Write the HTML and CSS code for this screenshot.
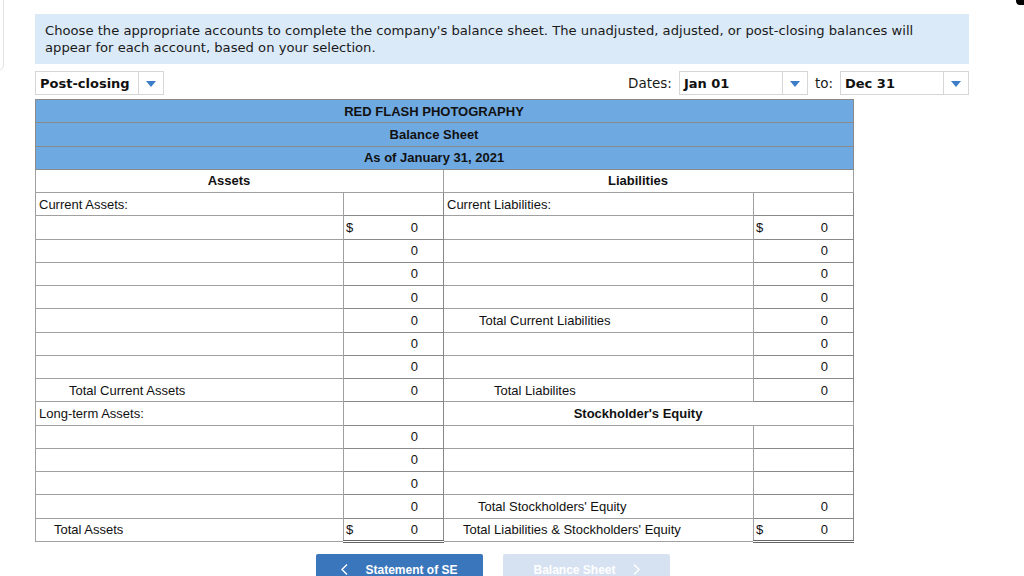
FILE: index.html
```html
<!DOCTYPE html>
<html lang="en">
<head>
<meta charset="utf-8">
<title>Balance Sheet</title>
<link rel="stylesheet" href="styles.css">
</head>
<body>
<div class="page">
  <div class="side-card"></div>
  <div class="corner-mark"></div>
  <div class="instructions">Choose the appropriate accounts to complete the company's balance sheet. The unadjusted, adjusted, or post-closing balances will<br>appear for each account, based on your selection.</div>
  <div class="controls">
    <div class="select select-type"><span class="select-value">Post-closing</span><span class="select-arrow"><span class="tri"></span></span></div>
    <div class="dates">
      <span class="dates-label">Dates:</span>
      <div class="select select-date"><span class="select-value">Jan 01</span><span class="select-arrow"><span class="tri"></span></span></div>
      <span class="dates-label">to:</span>
      <div class="select select-date"><span class="select-value">Dec 31</span><span class="select-arrow"><span class="tri"></span></span></div>
    </div>
  </div>
  <table class="sheet">
    <colgroup>
      <col class="col-label-l"><col class="col-amt"><col class="col-label-r"><col class="col-amt">
    </colgroup>
    <tr class="head"><td colspan="4">RED FLASH PHOTOGRAPHY</td></tr>
    <tr class="head"><td colspan="4">Balance Sheet</td></tr>
    <tr class="head"><td colspan="4">As of January 31, 2021</td></tr>
    <tr class="section"><td colspan="2">Assets</td><td colspan="2">Liabilities</td></tr>
    <tr><td class="label">Current Assets:</td><td class="amt"></td><td class="label">Current Liabilities:</td><td class="amt"></td></tr>
    <tr><td class="label"></td><td class="amt"><span class="cur">$</span>0</td><td class="label"></td><td class="amt"><span class="cur">$</span>0</td></tr>
    <tr><td class="label"></td><td class="amt">0</td><td class="label"></td><td class="amt">0</td></tr>
    <tr><td class="label"></td><td class="amt">0</td><td class="label"></td><td class="amt">0</td></tr>
    <tr><td class="label"></td><td class="amt">0</td><td class="label"></td><td class="amt">0</td></tr>
    <tr><td class="label"></td><td class="amt">0</td><td class="label ind-36">Total Current Liabilities</td><td class="amt total">0</td></tr>
    <tr><td class="label"></td><td class="amt">0</td><td class="label"></td><td class="amt">0</td></tr>
    <tr><td class="label"></td><td class="amt">0</td><td class="label"></td><td class="amt">0</td></tr>
    <tr><td class="label ind-34">Total Current Assets</td><td class="amt total">0</td><td class="label ind-51">Total Liabilites</td><td class="amt total">0</td></tr>
    <tr><td class="label">Long-term Assets:</td><td class="amt"></td><td class="subhead" colspan="2">Stockholder's Equity</td></tr>
    <tr><td class="label"></td><td class="amt">0</td><td class="label"></td><td class="amt"></td></tr>
    <tr><td class="label"></td><td class="amt">0</td><td class="label"></td><td class="amt"></td></tr>
    <tr><td class="label"></td><td class="amt">0</td><td class="label"></td><td class="amt"></td></tr>
    <tr><td class="label"></td><td class="amt">0</td><td class="label ind-35">Total Stockholders' Equity</td><td class="amt total">0</td></tr>
    <tr><td class="label ind-19">Total Assets</td><td class="amt total grand"><span class="cur">$</span>0</td><td class="label ind-20">Total Liabilities &amp; Stockholders' Equity</td><td class="amt total grand"><span class="cur">$</span>0</td></tr>
  </table>
  <div class="nav">
    <button class="nav-btn nav-prev"><svg class="chev" width="7" height="11" viewBox="0 0 7 11"><polyline points="6,0.5 1,5.5 6,10.5" fill="none" stroke="#fff" stroke-width="1.4"/></svg>Statement of SE</button>
    <button class="nav-btn nav-next" disabled>Balance Sheet<svg class="chev" width="7" height="11" viewBox="0 0 7 11"><polyline points="1,0.5 6,5.5 1,10.5" fill="none" stroke="#fff" stroke-width="1.4"/></svg></button>
  </div>
</div>
</body>
</html>
```

FILE: styles.css
```css
html, body {
  margin: 0;
  padding: 0;
  background: #fff;
  overflow: hidden;
}
body {
  font-family: "Liberation Sans", Arial, sans-serif;
  color: #111;
}
.page {
  position: relative;
  width: 1024px;
  height: 576px;
  box-sizing: border-box;
  padding: 14px 0 0 35px;
}
.side-card {
  position: absolute;
  left: -12px;
  top: -12px;
  width: 14px;
  height: 81px;
  border: 1px solid #e2e2e2;
  border-radius: 6px;
}
.corner-mark {
  position: absolute;
  right: -4px;
  top: -6px;
  width: 12px;
  height: 11px;
  background: #000;
  border-radius: 4px;
}
.instructions {
  width: 914px;
  height: 34px;
  padding: 8px 10px;
  background: #dbeaf8;
  font-family: "DejaVu Sans", Verdana, sans-serif;
  font-size: 13.15px;
  line-height: 17px;
  color: #1a1a1a;
  white-space: nowrap;
}
.controls {
  display: flex;
  justify-content: space-between;
  align-items: center;
  width: 934px;
  margin-top: 7px;
  height: 24px;
}
.select {
  display: flex;
  align-items: stretch;
  height: 24px;
  box-sizing: border-box;
  border: 1px solid #d6d6d6;
  background: #fff;
}
.select-type { width: 129px; }
.select-date { width: 129px; }
.select-value {
  flex: 1;
  display: flex;
  align-items: center;
  padding-left: 4px;
  font-family: "DejaVu Sans", Verdana, sans-serif;
  font-weight: bold;
  font-size: 13px;
  color: #111;
}
.select-arrow {
  width: 24px;
  border-left: 1px solid #d6d6d6;
  display: flex;
  align-items: center;
  justify-content: center;
}
.tri {
  width: 0;
  height: 0;
  border-left: 5px solid transparent;
  border-right: 5px solid transparent;
  border-top: 6px solid #3b7dc9;
  margin-top: 2px;
}
.dates {
  display: flex;
  align-items: center;
  gap: 7px;
}
.dates-label {
  font-family: "DejaVu Sans", Verdana, sans-serif;
  font-size: 13.5px;
  color: #1a1a1a;
}
.sheet {
  margin-top: 4px;
  border-collapse: collapse;
  table-layout: fixed;
  width: 819px;
  font-size: 13px;
}
.col-label-l { width: 308px; }
.col-amt { width: 100px; }
.col-label-r { width: 310px; }
.sheet td {
  height: 23.25px;
  box-sizing: border-box;
  padding: 0 3px;
  border: 1px solid #a0a0a0;
  white-space: nowrap;
  vertical-align: middle;
}
.sheet .head td {
  background: #6fa9e1;
  border-color: #8a8a8a;
  text-align: center;
  font-weight: bold;
  padding-right: 24px;
}
.sheet .section td,
.sheet td.subhead {
  text-align: center;
  font-weight: bold;
  padding-right: 24px;
}
.sheet td.amt {
  text-align: right;
  padding: 0 25px 0 2px;
  border-color: #888;
}
.cur { float: left; }
.sheet td.total { border-top: 1px solid #111; }
.sheet td.grand { border-bottom: 3px double #666; }
.sheet td.ind-19 { padding-left: 18px; }
.sheet td.ind-20 { padding-left: 19px; }
.sheet td.ind-34 { padding-left: 33px; }
.sheet td.ind-35 { padding-left: 34px; }
.sheet td.ind-36 { padding-left: 35px; }
.sheet td.ind-51 { padding-left: 50px; }
.nav {
  display: flex;
  gap: 20px;
  margin-top: 11px;
  padding-left: 281px;
}
.nav-btn {
  width: 167px;
  height: 32px;
  border: none;
  border-radius: 2px;
  font-family: "Liberation Sans", Arial, sans-serif;
  font-weight: bold;
  font-size: 12px;
  color: #fff;
  display: flex;
  align-items: center;
  justify-content: center;
  gap: 17px;
  padding: 0;
}
.nav-prev { background: #3a76bb; }
.nav-next { background: #d6e2f1; }
.chev { flex: none; }
```
